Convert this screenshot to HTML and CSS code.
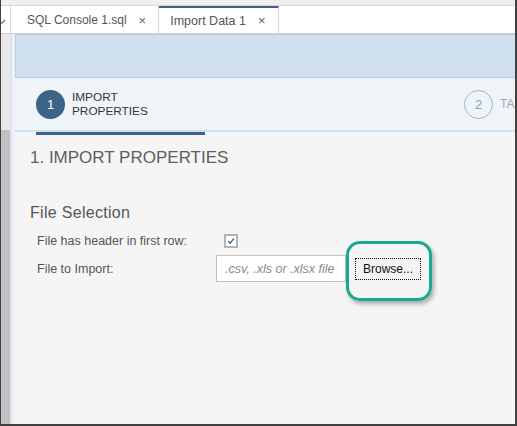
FILE: index.html
```html
<!DOCTYPE html>
<html>
<head>
<meta charset="utf-8">
<link rel="stylesheet" href="styles.css">
</head>
<body>
<div class="frame">
  <div class="topstrip"></div>
  <div class="tabbar">
    <div class="stub"><svg width="6" height="6" viewBox="0 0 6 6"><path d="M-3 1 L0.5 4.5 L4 1" fill="none" stroke="#3d79b8" stroke-width="1.2"/></svg></div>
    <div class="tab">SQL Console 1.sql <span class="x">×</span></div>
    <div class="tab active">Import Data 1 <span class="x">×</span></div>
  </div>
  <div class="body">
    <div class="sidebar"><div class="sb-top"></div><div class="sb-thumb"></div></div>
    <div class="panel">
      <div class="banner"></div>
      <div class="wizard">
        <div class="step step-active"><span class="num">1</span><span class="lbl">IMPORT<br>PROPERTIES</span></div>
        <div class="step step-next"><span class="num">2</span><span class="lbl">TABLE MAPPING</span></div>
      </div>
      <div class="track"><div class="bar"></div></div>
      <div class="content">
        <h1 class="title">1. IMPORT PROPERTIES</h1>
        <h2 class="section">File Selection</h2>
        <div class="form">
          <div class="label">File has header in first row:</div>
          <div class="ctrl"><span class="check"><svg width="14" height="14" viewBox="0 0 14 14"><rect x="1" y="1" width="12" height="12" fill="#fff" stroke="#b3b3b3" stroke-width="2"/><path d="M4.2 7.2 L6.2 9.2 L9.8 4.6" fill="none" stroke="#2f5f8f" stroke-width="1.3"/></svg></span></div>
          <div class="label">File to Import:</div>
          <div class="ctrl">
            <div class="input">.csv, .xls or .xlsx file</div>
            <div class="btnwrap"><button class="browse">Browse...</button><span class="highlight"></span></div>
          </div>
        </div>
      </div>
    </div>
  </div>
</div>
</body>
</html>
```

FILE: styles.css
```css
html, body { margin: 0; padding: 0; }
body { width: 517px; height: 426px; overflow: hidden; font-family: "Liberation Sans", Arial, sans-serif; background: #f5f5f5; }
.frame {
  width: 517px; height: 426px; box-sizing: border-box;
  border-left: 1px solid #404040; border-right: 2px solid #404040; border-bottom: 2px solid #404040;
  display: flex; flex-direction: column; overflow: hidden;
}
.topstrip { height: 5px; background: #efefef; border-bottom: 1px solid #d8d8d8; flex-shrink: 0; }
.tabbar { height: 27px; background: #fff; border-bottom: 1px solid #cfcfcf; display: flex; flex-shrink: 0; }
.stub { width: 10px; border-right: 1px solid #dcdcdc; display: flex; align-items: center; padding-top: 4px; box-sizing: border-box; }
.stub svg { display: block; }
.tab {
  display: flex; align-items: center; gap: 12px;
  font-size: 12px; color: #555; padding: 0 12px 0 16px; box-sizing: border-box;
  border-right: 1px solid #d6d6d6; white-space: nowrap; padding-top: 1px;
}
.tab .x { font-size: 13px; color: #666; }
.tab.active { border-top: 2px solid #3a6189; padding: 0 12px 0 11px; font-size: 12.5px; }
.body { flex: 1; display: flex; min-height: 0; }
.sidebar { width: 9px; border-right: 2px solid #dde3ea; display: flex; flex-direction: column; flex-shrink: 0; }
.sb-top { height: 96px; background: #e9e9e9; }
.sb-thumb { flex: 1; background: #c1c1c1; }
.panel { flex: 1; display: flex; flex-direction: column; background: #eef2f6; padding-left: 3px; min-width: 0; }
.banner { height: 44px; box-sizing: border-box; background: #d1e0ee; border: 1px solid #bccbd9; border-right: none; flex-shrink: 0; }
.wizard {
  height: 54px; box-sizing: border-box; background: #eff4f9; border-bottom: 2px solid #d3e0ec;
  display: flex; align-items: center; overflow: hidden; flex-shrink: 0;
}
.step { display: flex; align-items: center; gap: 7px; flex-shrink: 0; white-space: nowrap; }
.step-active { margin-left: 21px; width: 169px; }
.step-next { margin-left: 259px; }
.num {
  width: 29px; height: 29px; border-radius: 50%; box-sizing: border-box;
  display: flex; align-items: center; justify-content: center; font-size: 13px; flex-shrink: 0;
}
.step-active .num { background: #3d6389; color: #fff; }
.step-next .num { border: 1px solid #a3b7cb; color: #8aa1b9; }
.lbl { font-size: 11.8px; line-height: 14px; color: #32363a; }
.step-next .lbl { color: #9aabbd; font-size: 12px; }
.track { height: 3px; background: #f5f5f5; flex-shrink: 0; }
.bar { margin-left: 21px; width: 169px; height: 3px; background: #3d6389; }
.content { flex: 1; background: #f5f5f5; padding: 13px 0 0 15px; }
.title { margin: 0; font-weight: normal; font-size: 17px; line-height: 20px; color: #5e5e5e; }
.section { margin: 35px 0 0 0; font-weight: normal; font-size: 16px; line-height: 20px; color: #555; letter-spacing: 0.3px; }
.form {
  margin: 9px 0 0 7px; display: grid; grid-template-columns: 179px auto;
  grid-template-rows: 18px 27px; row-gap: 5px; align-items: center;
}
.label { font-size: 12.5px; line-height: 16px; color: #555; }
.ctrl { display: flex; align-items: center; }
.check { margin-left: 8px; display: block; height: 14px; }
.check svg { display: block; }
.input {
  width: 130px; height: 27px; box-sizing: border-box; border: 1px solid #c2c2c2; background: #fff;
  font-style: italic; font-size: 12.5px; color: #8a8a8a; padding: 0 0 0 8px;
  display: flex; align-items: center; white-space: nowrap;
}
.btnwrap { position: relative; margin-left: 9px; }
.browse {
  display: block; width: 66px; height: 22px; box-sizing: border-box; margin: 0;
  border: 1px dotted #111; background: #f4f4f4; font-family: "Liberation Sans", Arial, sans-serif;
  font-size: 12px; color: #111; padding: 0;
}
.highlight {
  position: absolute; left: -9px; top: -17px; width: 86px; height: 60px; box-sizing: border-box;
  border: 3px solid #19aa8c; border-radius: 14px;
  box-shadow: 2px 3px 4px rgba(0,0,0,0.3);
}
```
